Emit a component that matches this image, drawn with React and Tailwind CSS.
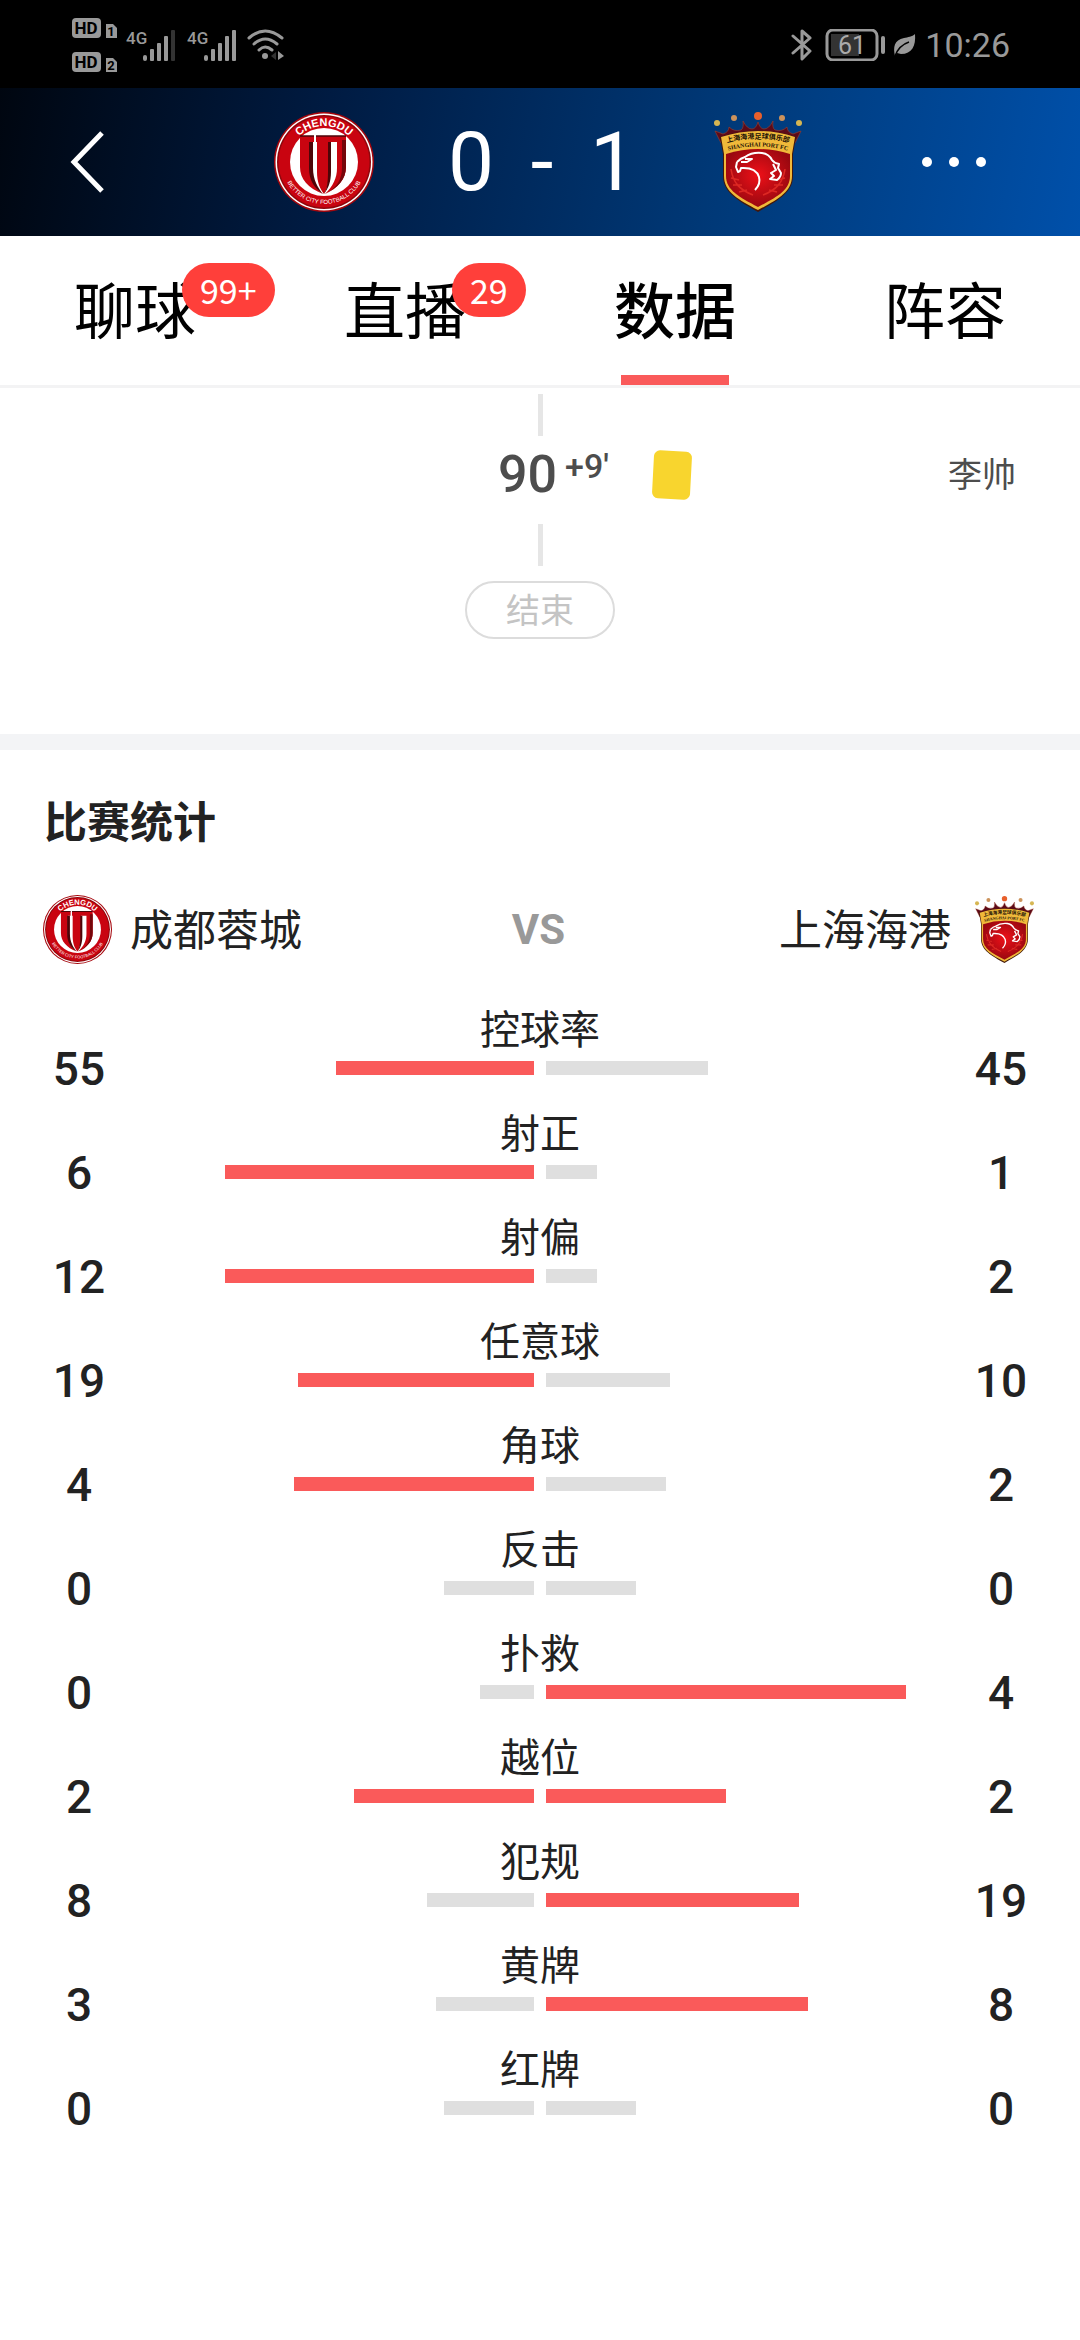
import React from 'react';

const TABS = [
  { id: 'chat', label: '聊球', badge: '99+' },
  { id: 'live', label: '直播', badge: '29' },
  { id: 'stats', label: '数据', active: true },
  { id: 'lineup', label: '阵容' },
];

const STATS = [
  { label: '控球率', home: 55, away: 45 },
  { label: '射正', home: 6, away: 1 },
  { label: '射偏', home: 12, away: 2 },
  { label: '任意球', home: 19, away: 10 },
  { label: '角球', home: 4, away: 2 },
  { label: '反击', home: 0, away: 0 },
  { label: '扑救', home: 0, away: 4 },
  { label: '越位', home: 2, away: 2 },
  { label: '犯规', home: 8, away: 19 },
  { label: '黄牌', home: 3, away: 8 },
  { label: '红牌', home: 0, away: 0 },
];

// Bar length in percent of its track; empty stats keep a short stub
function barWidth(value, other) {
  const total = value + other;
  if (total === 0) return 25;
  if (value === 0) return 15;
  return (value / total) * 100;
}

function ChengduLogo({ className }) {
  return (
    <svg className={className} viewBox="0 0 100 100" aria-label="成都蓉城">
      <defs>
        <path id="cd-top" d="M14 50a36 36 0 0 1 72 0" />
        <path id="cd-bottom" d="M8 50a42 42 0 0 0 84 0" />
      </defs>
      <circle cx="50" cy="50" r="50" fill="#a5060c" />
      <circle cx="50" cy="50" r="48.5" fill="#fff" />
      <circle cx="50" cy="50" r="47" fill="#8f070c" />
      <circle cx="50" cy="50" r="45.5" fill="#c90410" />
      <circle cx="50" cy="50" r="34" fill="#fff" />
      <path d="M26 24H40V30H36V56C36 68 41 76 49 82C34 76 26 67 26 55Z" fill="#c90410" />
      <path d="M35 30h4v26c0 12 5 20 10 26C40 76 35 68 35 56z" fill="#4d0508" />
      <path d="M42 24H72V55C72 67 64 76 51 82C59 74 63 66 63 56V30H55V60C55 70 53 77 50 82C46 77 43 70 43 60V30H42Z" fill="#c90410" />
      <path d="M54 30h3V60c0 10-3 17-7 22C53 77 54 70 54 60z" fill="#4d0508" />
      <path d="M68 28h4v27c0 12-8 21-21 27C63 76 68 67 68 56z" fill="#75060a" />
      <path d="M26 24h14M42 24h30" stroke="#4d0508" strokeWidth="1.5" />
      <text fill="#fff" fontSize="11" fontWeight="700" className="font-[Liberation_Sans,sans-serif]" textAnchor="middle">
        <textPath href="#cd-top" startOffset="50%">CHENGDU</textPath>
      </text>
      <text fill="#fff" fontSize="6" className="font-[Liberation_Sans,sans-serif]" textAnchor="middle">
        <textPath href="#cd-bottom" startOffset="50%">BETTER CITY FOOTBALL CLUB</textPath>
      </text>
    </svg>
  );
}

function ShanghaiLogo({ className }) {
  return (
    <svg className={className} viewBox="0 0 88 100" aria-label="上海海港">
      <defs>
        <radialGradient id="sh-red" cx="50%" cy="45%" r="55%">
          <stop offset="0" stopColor="#ee1018" />
          <stop offset="1" stopColor="#990810" />
        </radialGradient>
        <path id="sh-cn" d="M9 32q35-11 70 0" />
        <path id="sh-en" d="M9 40q35-11 70 0" />
      </defs>
      <circle cx="44" cy="4" r="4" fill="#e8602c" />
      <circle cx="20" cy="6" r="3" fill="#cc935c" />
      <circle cx="68" cy="6" r="3" fill="#cc935c" />
      <circle cx="3" cy="11" r="3" fill="#d6b652" />
      <circle cx="85" cy="11" r="3" fill="#d6b652" />
      <path d="M1 19l8 3q6-2 6-7q5 5 12 3q3-2 2-9q4 8 9 8q4 0 6-7q2 7 6 7q5 0 9-8q-1 7 2 9q7 2 12-3q0 5 6 7l8-3l-6 12H7z" fill="#5c0a18" stroke="#a0402c" strokeWidth="0.6" />
      <path d="M6 25q38-13 76 0l-3 17v22c0 17-16 25-35 36C25 89 9 81 9 64V42z" fill="#42180c" />
      <path d="M7 25q37-12 74 0l-3 17v22c0 16-15 24-34 34C25 88 10 80 10 64V42z" fill="#f0b93a" />
      <path d="M12 42q32-10 64 0v22c0 14-13 21-32 31C25 85 12 78 12 64z" fill="url(#sh-red)" />
      <path d="M17 57c2 14 9 21 22 26M71 57c-2 14-9 21-22 26M17 66l8 2M19 73l9 0M25 80l8-2M71 66l-8 2M69 73l-9 0M63 80l-8-2" fill="none" stroke="#dd2823" strokeWidth="1.6" />
      <path d="M23 50q4-4 8-5q7-5 17-4q7 1 10 7q2 3 7 4l-1 4l3 5q0 4-4 7l-7-1l4-3l-3-3l5-3l-3-6" fill="none" stroke="#fff" strokeWidth="2" strokeLinejoin="round" />
      <path d="M23 50l-1 5l2 5l2-1l1-3q15-1 18 9q2 7-4 13M31 47l7 0l-5 3l-6 0" fill="none" stroke="#fff" strokeWidth="2" strokeLinejoin="round" />
      <text fill="#1e1408" fontSize="7" fontWeight="700" className="font-['Noto_Sans_CJK_SC',sans-serif]" textAnchor="middle">
        <textPath href="#sh-cn" startOffset="50%">上海海港足球俱乐部</textPath>
      </text>
      <text fill="#1e1408" fontSize="6" fontWeight="700" className="font-[Liberation_Serif,serif]" textAnchor="middle">
        <textPath href="#sh-en" startOffset="50%">SHANGHAI PORT FC</textPath>
      </text>
    </svg>
  );
}

function HdBadge({ sim }) {
  return (
    <svg className="h-5 w-[46px]" viewBox="0 0 46 20">
      <rect x="0" y="0" width="29" height="20" rx="4" fill="#999" />
      <path d="M34 6h7l4 4v10H34z" fill="#999" strokeLinejoin="round" />
      <text x="14" y="16" fontSize="17" fontWeight="700" textAnchor="middle" fill="#000">HD</text>
      <text x="39" y="18" fontSize="13" fontWeight="700" textAnchor="middle" fill="#000">{sim}</text>
    </svg>
  );
}

function Signal({ weak }) {
  return (
    <svg className="h-9 w-[50px]" viewBox="0 0 50 36">
      <text x="0" y="17" fontSize="17" fontWeight="500" fill="#999">4G</text>
      <g fill="#999">
        <rect x="17" y="28" width="4" height="6" rx="2" />
        <rect x="24" y="22" width="4" height="12" rx="1" />
        <rect x="31" y="16" width="4" height="18" rx="1" />
        <rect x="38" y="9" width="4" height="25" rx="1" />
        <rect x="45" y="3" width="4" height="31" rx="1" fill={weak ? '#333' : '#999'} />
      </g>
    </svg>
  );
}

function StatusBar() {
  return (
    <div className="flex h-[88px] items-center justify-between bg-black pt-[2px] pr-[70px] pl-[72px] font-[Roboto,sans-serif] text-[#999]">
      <div className="flex items-center">
        <div className="flex flex-col gap-[14px]">
          <HdBadge sim="1" />
          <HdBadge sim="2" />
        </div>
        <div className="ml-2 flex gap-[11px]">
          <Signal weak />
          <Signal />
        </div>
        <svg className="ml-[10px] h-8 w-[38px]" viewBox="0 0 38 32" fill="none" stroke="#999" strokeWidth="3" strokeLinecap="round">
          <path d="M2 9q16-14 33 0M7 15q11-10 23 0M12 21q6-6 13 0" />
          <circle cx="18" cy="27" r="3" fill="#999" stroke="none" />
          <path d="M29 23v8l-5-4z" fill="#333" stroke="none" />
          <path d="M31 22v9l6-4z" fill="#999" stroke="none" />
        </svg>
      </div>
      <div className="flex items-center">
        <svg className="h-9 w-[22px]" viewBox="0 0 22 36" fill="none" stroke="#999" strokeWidth="3" strokeLinejoin="round" strokeLinecap="round">
          <path d="M2 9l17 15-8 8V4l8 7L2 26" />
        </svg>
        <svg className="ml-3 h-8 w-[60px]" viewBox="0 0 60 32">
          <rect x="2" y="1" width="50" height="30" rx="6" fill="none" stroke="#999" strokeWidth="3" />
          <rect x="6" y="5" width="28" height="22" fill="#333" />
          <rect x="56" y="7" width="4" height="18" rx="2" fill="#999" />
          <text x="27" y="25" fontSize="25" textAnchor="middle" fill="#aaa">61</text>
        </svg>
        <svg className="ml-2 h-6 w-6" viewBox="0 0 24 24">
          <path d="M22 1c1 12-3 20-14 20l-4-1l-2 3c-2-9-1-16 9-18c4-1 8-1 11-4z" fill="#999" />
          <path d="M2 23c3-8 8-12 14-14" fill="none" stroke="#000" strokeWidth="1.5" />
        </svg>
        <span className="ml-2 text-[34px] leading-10">10:26</span>
      </div>
    </div>
  );
}

function MatchHeader() {
  return (
    <header className="flex h-[148px] items-center justify-between bg-linear-[100deg,#000610_0%,#001b42_30%,#003a7a_68%,#0050aa_100%] px-[70px] text-white">
      <button type="button" aria-label="返回" className="flex h-20 w-[84px] items-center">
        <svg className="h-[62px] w-[36px]" viewBox="0 0 36 62" fill="none" stroke="currentColor" strokeWidth="5">
          <path d="M32 2L4 31l28 29" />
        </svg>
      </button>
      <div className="flex items-center gap-[70px]">
        <ChengduLogo className="h-[100px] w-[100px]" />
        <div className="flex w-[200px] items-center justify-between pr-2 pl-1 font-[Roboto,sans-serif] text-[82px] leading-[100px]">
          <span>0</span>
          <span>-</span>
          <span>1</span>
        </div>
        <ShanghaiLogo className="h-[100px] w-[88px]" />
      </div>
      <button type="button" aria-label="更多" className="flex h-20 w-[88px] items-center gap-[17px]">
        <span className="h-[10px] w-[10px] shrink-0 rounded-full bg-white" />
        <span className="h-[10px] w-[10px] shrink-0 rounded-full bg-white" />
        <span className="h-[10px] w-[10px] shrink-0 rounded-full bg-white" />
      </button>
    </header>
  );
}

function Tabs() {
  return (
    <nav className="flex h-[152px] border-b-[3px] border-[#f3f3f4]">
      {TABS.map((tab) => (
        <button key={tab.id} type="button" className="relative flex flex-1 justify-center pt-[34px]">
          <span className={`relative text-[61px] leading-[76px] text-black ${tab.active ? 'font-medium' : ''}`}>
            {tab.label}
            {tab.badge && (
              <span className="absolute -top-[7px] left-[108px] rounded-full bg-[#ff3f3a] px-[18px] text-[34px] leading-[54px] text-white">
                {tab.badge}
              </span>
            )}
          </span>
          {tab.active && (
            <span className="absolute bottom-0 left-1/2 h-[10px] w-[108px] -translate-x-1/2 bg-[#fa5a5a]" />
          )}
        </button>
      ))}
    </nav>
  );
}

function Timeline() {
  return (
    <section className="flex flex-col items-center border-b-[16px] border-[#f3f4f6] pt-[6px] pb-[95px]">
      <span className="h-[42px] w-[5px] bg-[#e6e6e6]" />
      <div className="grid h-[88px] w-full grid-cols-2 items-center pb-[10px]">
        <div className="col-start-2 flex items-center justify-between pr-16">
          <div className="-ml-[42px] flex items-center">
            <span className="flex font-[Roboto,sans-serif] font-medium text-[#4d4d4d]">
              <span className="text-[52px] leading-[60px]">90</span>
              <span className="ml-2 text-[34px] leading-[42px]">+9′</span>
            </span>
            <span className="ml-11 h-[48px] w-[38px] rotate-3 rounded-md bg-[#f8d52e]" />
          </div>
          <span className="pb-[4px] text-[34px] leading-[46px] text-[#4d4d4d]">李帅</span>
        </div>
      </div>
      <span className="h-[42px] w-[5px] bg-[#e6e6e6]" />
      <span className="mt-[15px] rounded-full border-2 border-[#dcdcdc] px-[39px] pb-[2px] text-[34px] leading-[52px] text-[#c4c4c4]">
        结束
      </span>
    </section>
  );
}

function StatRow({ stat }) {
  const { label, home, away } = stat;
  const homeColor = home >= away && home > 0 ? 'bg-[#fa5a5a]' : 'bg-[#dfdfdf]';
  const awayColor = away >= home && away > 0 ? 'bg-[#fa5a5a]' : 'bg-[#dfdfdf]';

  return (
    <li className="flex items-end">
      <span className="w-[158px] text-center font-[Roboto,sans-serif] text-[46px] leading-[48px] font-medium">{home}</span>
      <div className="flex-1 px-4 pb-[18px]">
        <p className="text-center text-[40px] leading-[54px]">{label}</p>
        <div className="mt-[7px] flex gap-3">
          <div className="flex flex-1 justify-end">
            <div className={`h-[14px] ${homeColor}`} style={{ width: `${barWidth(home, away)}%` }} />
          </div>
          <div className="flex flex-1">
            <div className={`h-[14px] ${awayColor}`} style={{ width: `${barWidth(away, home)}%` }} />
          </div>
        </div>
      </div>
      <span className="w-[158px] text-center font-[Roboto,sans-serif] text-[46px] leading-[48px] font-medium">{away}</span>
    </li>
  );
}

function MatchStats() {
  return (
    <section className="pt-[37px] text-[#222]">
      <h2 className="px-[44px] text-[43px] leading-[64px] font-bold">比赛统计</h2>
      <div className="mt-[44px] grid grid-cols-[1fr_auto_1fr] items-center pr-[46px] pl-[43px]">
        <div className="flex items-center gap-[18px]">
          <ChengduLogo className="h-[69px] w-[69px]" />
          <span className="pb-[6px] text-[43px] leading-[58px]">成都蓉城</span>
        </div>
        <span className="font-[Roboto,sans-serif] text-[42px] leading-[64px] font-bold text-[#999]">VS</span>
        <div className="flex items-center justify-end gap-[24px]">
          <span className="pb-[6px] text-[43px] leading-[58px]">上海海港</span>
          <ShanghaiLogo className="h-[67px] w-[59px]" />
        </div>
      </div>
      <ul className="mt-[36px] flex flex-col gap-[11px]">
        {STATS.map((stat) => (
          <StatRow key={stat.label} stat={stat} />
        ))}
      </ul>
    </section>
  );
}

export default function App() {
  return (
    <div className="min-h-screen bg-white font-['Noto_Sans_CJK_SC',sans-serif]">
      <StatusBar />
      <MatchHeader />
      <Tabs />
      <main>
        <Timeline />
        <MatchStats />
      </main>
    </div>
  );
}
